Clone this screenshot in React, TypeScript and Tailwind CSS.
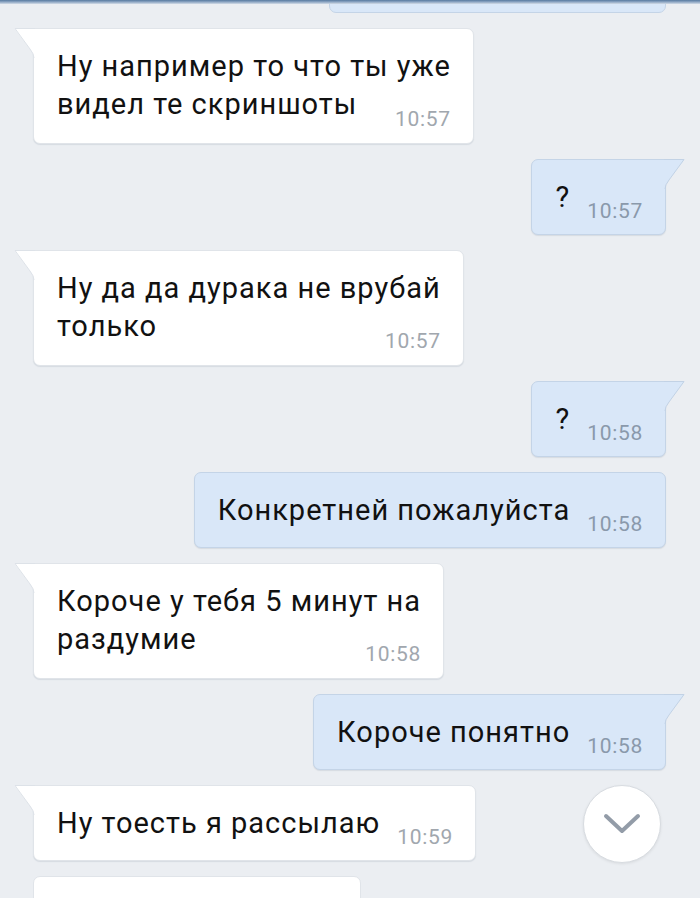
import React from "react";

type Msg = {
  out: boolean;
  lines: string[];
  time: string;
  tail: boolean;
};

const messages: Msg[] = [
  { out: false, lines: ["Ну например то что ты уже", "видел те скриншоты"], time: "10:57", tail: true },
  { out: true, lines: ["?"], time: "10:57", tail: true },
  { out: false, lines: ["Ну да да дурака не врубай", "только"], time: "10:57", tail: true },
  { out: true, lines: ["?"], time: "10:58", tail: true },
  { out: true, lines: ["Конкретней пожалуйста"], time: "10:58", tail: false },
  { out: false, lines: ["Короче у тебя 5 минут на", "раздумие"], time: "10:58", tail: true },
  { out: true, lines: ["Короче понятно"], time: "10:58", tail: true },
  { out: false, lines: ["Ну тоесть я рассылаю"], time: "10:59", tail: true },
];

function Tail({ out }: { out: boolean }) {
  if (out) {
    return (
      <svg
        className="absolute top-[-1px] right-[-20px]"
        width="21"
        height="30"
        viewBox="0 0 21 30"
      >
        <path d="M20.5 0.5 L5 21 Q1 26 1 30 L0 30 L0 0 Z" fill="#d9e7f8" />
        <path d="M0 0.5 L20 0.5 L5 21 Q1 26 1 30" fill="none" stroke="#c2d2e5" strokeWidth="1" />
      </svg>
    );
  }
  return (
    <svg
      className="absolute top-[-1px] left-[-20px]"
      width="21"
      height="30"
      viewBox="0 0 21 30"
    >
      <path d="M0.5 0.5 L16 21 Q20 26 20 30 L21 30 L21 0 Z" fill="#ffffff" />
      <path d="M21 0.5 L1 0.5 L16 21 Q20 26 20 30" fill="none" stroke="#dde2e8" strokeWidth="1" />
    </svg>
  );
}

function Bubble({ m }: { m: Msg }) {
  const base = m.out
    ? "bg-[#d9e7f8] border border-[#c4d4e7] self-end"
    : "bg-white border border-[#e0e4e9] self-start";
  const corner = m.tail ? (m.out ? "rounded-tr-none" : "rounded-tl-none") : "";
  const timeColor = m.out ? "text-[#8a99ab]" : "text-[#a1a7ae]";
  const multi = m.lines.length > 1;
  const textCls = "text-[29px] leading-[38px] tracking-[1px] text-[#111]";
  const timeCls = `text-[21px] leading-none tracking-[0.7px] ${timeColor}`;

  return (
    <div
      className={`relative rounded-[7px] ${corner} ${base} pl-[23px] pr-[22px] pt-[18px] ${multi ? "pb-[20px]" : "pb-[18px]"} shadow-[0_1px_1px_rgba(60,80,110,0.12)]`}
    >
      {m.tail && <Tail out={m.out} />}
      {multi ? (
        <div className="grid">
          <div className={`col-start-1 row-start-1 ${textCls}`}>
            {m.lines.map((l, i) => (
              <div key={i}>{l}</div>
            ))}
          </div>
          <span className={`col-start-1 row-start-1 self-end justify-self-end mb-[-7px] ${timeCls}`}>
            {m.time}
          </span>
        </div>
      ) : (
        <div className="flex items-end">
          <div className={textCls}>{m.lines[0]}</div>
          <span className={`ml-[17px] mb-[-6px] ${timeCls}`}>{m.time}</span>
        </div>
      )}
    </div>
  );
}

export default function App() {
  return (
    <div
      className="relative h-[898px] w-[700px] overflow-hidden bg-[#ebeef2]"
      style={{ fontFamily: "Roboto, 'Noto Sans', sans-serif" }}
    >
      <div className="relative z-10 h-[4px] bg-gradient-to-b from-[#56799f] via-[#8fa7c4] to-[#d3dce7]" />
      <div className="flex flex-col gap-[15px] pl-[33px] pr-[34px] -mt-[67px]">
        <div className="h-[76px] w-[337px] self-end rounded-[7px] border border-[#c4d4e7] bg-[#d9e7f8]" />
        {messages.map((m, i) => (
          <Bubble key={i} m={m} />
        ))}
        <div className="h-[80px] w-[328px] self-start rounded-[7px] border border-[#e0e4e9] bg-white" />
      </div>

      <button className="absolute right-[39px] bottom-[35px] flex h-[78px] w-[78px] items-center justify-center rounded-full border border-[#d8dce1] bg-white shadow-[0_1px_3px_rgba(0,0,0,0.08)]">
        <svg width="38" height="22" viewBox="0 0 38 22">
          <polyline
            points="3,3 19,18 35,3"
            fill="none"
            stroke="#939ca8"
            strokeWidth="4"
            strokeLinecap="round"
            strokeLinejoin="round"
          />
        </svg>
      </button>
    </div>
  );
}
